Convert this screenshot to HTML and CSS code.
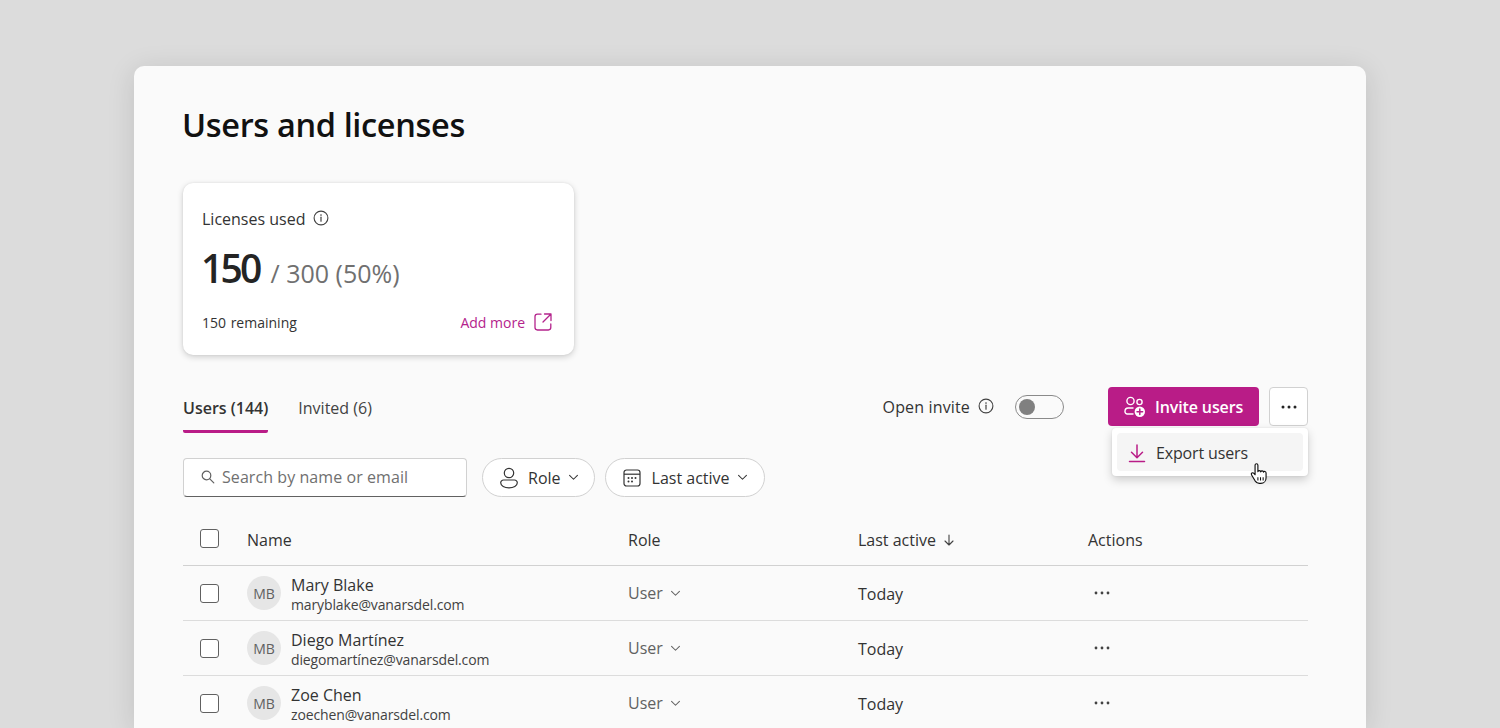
FILE: index.html
```html
<!DOCTYPE html>
<html lang="en">
<head>
<meta charset="utf-8">
<title>Users and licenses</title>
<link rel="stylesheet" href="styles.css">
</head>
<body>
<main class="panel">
  <h1 class="title">Users and licenses</h1>

  <section class="card">
    <div class="card-head">
      <span>Licenses used</span>
      <svg class="icon16" viewBox="0 0 16 16"><circle cx="8" cy="8" r="6.9" fill="none" stroke="#424242" stroke-width="1.1"/><path d="M8 7.2v4" stroke="#424242" stroke-width="1.2" stroke-linecap="round"/><circle cx="8" cy="5.1" r=".8" fill="#424242"/></svg>
    </div>
    <div class="card-figure"><span class="big">150</span><span class="rest">/ 300 (50%)</span></div>
    <div class="card-foot">
      <span class="remaining">150 remaining</span>
      <a class="addmore">Add more
        <svg class="icon20" viewBox="0 0 20 20"><path d="M8 2.200H4.400A2.400 2.400 0 0 0 2 4.600v11a2.400 2.400 0 0 0 2.400 2.400h11a2.400 2.400 0 0 0 2.400-2.400V12M11.500 2H18v6.500M18 2l-8 8" fill="none" stroke="#b4238c" stroke-width="1.300" stroke-linecap="round" stroke-linejoin="round"/></svg>
      </a>
    </div>
  </section>

  <div class="toolbar">
    <div class="tabs">
      <div class="tab active">Users (144)</div>
      <div class="tab">Invited (6)</div>
    </div>
    <div class="actions">
      <span class="invite-label">Open invite</span>
      <svg class="icon16 invite-info" viewBox="0 0 16 16"><circle cx="8" cy="8" r="6.9" fill="none" stroke="#424242" stroke-width="1.1"/><path d="M8 7.2v4" stroke="#424242" stroke-width="1.2" stroke-linecap="round"/><circle cx="8" cy="5.1" r=".8" fill="#424242"/></svg>
      <span class="toggle"><span class="knob"></span></span>
      <button class="primary">
        <svg class="icon24" viewBox="0 0 24 24"><g fill="none" stroke="#fff" stroke-width="1.4"><circle cx="7.5" cy="6" r="3.6"/><circle cx="16.5" cy="7" r="2.6"/><path d="M10.5 19H4.200A2.200 2.200 0 0 1 2 16.800v-.6A3.200 3.200 0 0 1 5.200 13h5.300"/></g><circle cx="16.800" cy="16.800" r="5.200" fill="#fff"/><path d="M16.800 14v5.600M14 16.800h5.600" stroke="#b91c87" stroke-width="1.5" stroke-linecap="round"/></svg>
        Invite users
      </button>
      <button class="more">
        <svg class="dots" viewBox="0 0 16 4"><circle cx="2" cy="2" r="1.500"/><circle cx="8" cy="2" r="1.500"/><circle cx="14" cy="2" r="1.500"/></svg>
      </button>
      <div class="menu">
        <div class="menu-item">
          <svg class="icon20" viewBox="0 0 20 20"><path d="M10 2v12.500M4.500 9.200 10 14.700l5.500-5.500M2.500 18.500h15" fill="none" stroke="#b91c87" stroke-width="1.500" stroke-linecap="round" stroke-linejoin="round"/></svg>
          Export users
        </div>
      </div>
      <svg class="cursor" viewBox="1 0.500 16.500 21"><path d="M5.500 2.600c0-1.800 2.700-1.800 2.700 0v6.200c.2-1.400 2.500-1.400 2.700.1.300-1.300 2.500-1.200 2.700.3.400-1 2.400-.8 2.400.8v4.500c0 3-2 5.500-5 5.500H9.500c-2 0-3-1-4-2.500L2.200 12c-1-1.500.9-3 2.200-1.600l1.100 1.300Z" fill="#fff" stroke="#111" stroke-width="1.100" stroke-linejoin="round"/><path d="M8.200 14v3.200M10.700 14v3.200M13.200 14v3.200" stroke="#111" stroke-width="1"/></svg>
    </div>
  </div>

  <div class="filters">
    <label class="search">
      <svg class="icon14" viewBox="0 0 14 14"><circle cx="5.500" cy="5.500" r="4.300" fill="none" stroke="#616161" stroke-width="1.200"/><path d="m8.800 8.800 4 4" stroke="#616161" stroke-width="1.200" stroke-linecap="round"/></svg>
      <span>Search by name or email</span>
    </label>
    <button class="pill">
      <svg class="icon-person" viewBox="0 0 18 22"><g fill="none" stroke="#333" stroke-width="1.200"><circle cx="9" cy="6" r="4.700"/><path d="M3.500 13h11a2.800 2.800 0 0 1 2.800 2.800c0 3-3.800 5-8.300 5s-8.300-2-8.300-5A2.800 2.800 0 0 1 3.500 13Z"/></g></svg>
      Role
      <svg class="chev" viewBox="0 0 12 8"><path d="m1.500 1.500 4.500 4.500 4.500-4.500" fill="none" stroke="#333" stroke-width="1.200" stroke-linecap="round" stroke-linejoin="round"/></svg>
    </button>
    <button class="pill">
      <svg class="icon20" viewBox="0 0 20 20"><rect x="2" y="2" width="16" height="16" rx="2.500" fill="none" stroke="#333" stroke-width="1.200"/><path d="M2 6.200h16" stroke="#333" stroke-width="1.200"/><g fill="#333"><circle cx="6.500" cy="10" r="1"/><circle cx="10" cy="10" r="1"/><circle cx="13.500" cy="10" r="1"/><circle cx="6.500" cy="13.500" r="1"/><circle cx="10" cy="13.500" r="1"/></g></svg>
      Last active
      <svg class="chev" viewBox="0 0 12 8"><path d="m1.500 1.500 4.500 4.500 4.500-4.500" fill="none" stroke="#333" stroke-width="1.200" stroke-linecap="round" stroke-linejoin="round"/></svg>
    </button>
  </div>

  <div class="table">
    <div class="row head">
      <span class="check"></span>
      <span class="cell">Name</span>
      <span class="cell">Role</span>
      <span class="cell sort">Last active
        <svg class="arrow" viewBox="0 0 12 12"><path d="M6 1v10M2 7l4 4 4-4" fill="none" stroke="#424242" stroke-width="1.100" stroke-linecap="round" stroke-linejoin="round"/></svg>
      </span>
      <span class="cell">Actions</span>
    </div>
    <div class="row">
      <span class="check"></span>
      <div class="person"><span class="avatar">MB</span><div class="who"><div class="name">Mary Blake</div><div class="email">maryblake@vanarsdel.com</div></div></div>
      <span class="role">User <svg class="chev small" viewBox="0 0 12 8"><path d="m1.500 1.500 4.500 4.500 4.500-4.500" fill="none" stroke="#616161" stroke-width="1.200" stroke-linecap="round" stroke-linejoin="round"/></svg></span>
      <span class="when">Today</span>
      <svg class="rowdots" viewBox="0 0 16 4"><circle cx="2" cy="2" r="1.400"/><circle cx="8" cy="2" r="1.400"/><circle cx="14" cy="2" r="1.400"/></svg>
    </div>
    <div class="row">
      <span class="check"></span>
      <div class="person"><span class="avatar">MB</span><div class="who"><div class="name">Diego Martínez</div><div class="email">diegomartínez@vanarsdel.com</div></div></div>
      <span class="role">User <svg class="chev small" viewBox="0 0 12 8"><path d="m1.500 1.500 4.500 4.500 4.500-4.500" fill="none" stroke="#616161" stroke-width="1.200" stroke-linecap="round" stroke-linejoin="round"/></svg></span>
      <span class="when">Today</span>
      <svg class="rowdots" viewBox="0 0 16 4"><circle cx="2" cy="2" r="1.400"/><circle cx="8" cy="2" r="1.400"/><circle cx="14" cy="2" r="1.400"/></svg>
    </div>
    <div class="row">
      <span class="check"></span>
      <div class="person"><span class="avatar">MB</span><div class="who"><div class="name">Zoe Chen</div><div class="email">zoechen@vanarsdel.com</div></div></div>
      <span class="role">User <svg class="chev small" viewBox="0 0 12 8"><path d="m1.500 1.500 4.500 4.500 4.500-4.500" fill="none" stroke="#616161" stroke-width="1.200" stroke-linecap="round" stroke-linejoin="round"/></svg></span>
      <span class="when">Today</span>
      <svg class="rowdots" viewBox="0 0 16 4"><circle cx="2" cy="2" r="1.400"/><circle cx="8" cy="2" r="1.400"/><circle cx="14" cy="2" r="1.400"/></svg>
    </div>
  </div>
</main>
</body>
</html>
```
FILE: styles.css
```css
* { box-sizing: border-box; }
html, body { margin: 0; height: 728px; overflow: hidden; }
body {
  background: #dcdcdc;
  padding: 66px 134px 0;
  font-family: "Open Sans", "Noto Sans", sans-serif;
  font-size: 16px;
  color: #242424;
}
button { font: inherit; color: inherit; cursor: pointer; }
svg { display: block; flex: none; }

.panel {
  height: 662px;
  padding: 36px 58px 0 49px;
  background: #fafafa;
  border-radius: 10px 10px 0 0;
  box-shadow: 0 4px 28px rgba(0,0,0,.12);
}
.title {
  margin: 0 0 0 -1px;
  font-size: 32.500px;
  line-height: 46px;
  font-weight: 600;
  letter-spacing: -.35px;
  color: #111;
}

.card {
  width: 391px;
  height: 172px;
  margin-top: 35px;
  padding: 24px 21px 0 19px;
  background: #fff;
  border-radius: 10px;
  box-shadow: 0 2px 6px rgba(0,0,0,.18), 0 0 2px rgba(0,0,0,.08);
}
.card-head { display: flex; align-items: center; gap: 8px; line-height: 24px; color: #333; }
.card-head .icon16 { margin-top: -3px; }
.icon16 { width: 16px; height: 16px; }
.icon14 { width: 14px; height: 14px; }
.icon20 { width: 20px; height: 20px; }
.icon24 { width: 24px; height: 24px; }
.icon-person { width: 18px; height: 22px; }
.card-figure { display: flex; align-items: baseline; gap: 11px; margin-top: 11px; height: 52px; }
.big { font-size: 39px; line-height: 52px; font-weight: 600; letter-spacing: -2.800px; margin-left: -1px; }
.rest { font-size: 25px; font-weight: 500; color: #707070; }
.card-foot { display: flex; justify-content: space-between; align-items: center; margin-top: 18px; }
.remaining { font-size: 14px; word-spacing: 1px; color: #333; }
.addmore { display: flex; align-items: center; gap: 8px; font-size: 14px; color: #b4238c; }

.toolbar { display: flex; justify-content: space-between; margin-top: 32px; height: 46px; }
.tabs { display: flex; gap: 30px; }
.tab { height: 46px; padding-top: 9px; line-height: 24px; color: #424242; }
.tab.active { font-weight: 600; color: #333; border-bottom: 3px solid #b91c87; border-radius: 0 0 2px 2px; }
.actions { position: relative; display: flex; align-items: flex-start; }
.invite-label { margin-top: 8px; line-height: 24px; letter-spacing: .15px; color: #333; }
.invite-info { margin: 11px 0 0 8px; }
.toggle { display: block; width: 49px; height: 24px; margin: 8px 44px 0 21px; padding: 3px; border: 1.500px solid #8a8a8a; border-radius: 12px; background: #fafafa; }
.knob { display: block; width: 16px; height: 16px; border-radius: 50%; background: #808080; }
.primary {
  display: flex; align-items: center; gap: 8px;
  width: 151px; height: 39px; padding: 0 0 0 15px;
  border: 0; border-radius: 4px;
  background: #b91c87; color: #fff;
  font-weight: 600; letter-spacing: -.13px;
}
.more {
  display: flex; align-items: center; justify-content: center;
  width: 39px; height: 39px; margin-left: 10px; padding: 0;
  background: #fff; border: 1px solid #d1d1d1; border-radius: 4px;
}
.dots { width: 16px; height: 4px; fill: #242424; }
.menu {
  position: absolute; top: 41px; right: 0;
  width: 196px; height: 48px; padding: 5px;
  background: #fff; border-radius: 4px;
  box-shadow: 0 4px 10px rgba(0,0,0,.18), 0 0 2px rgba(0,0,0,.1);
}
.menu-item {
  display: flex; align-items: center; gap: 9px;
  height: 38px; padding: 1px 0 0 10px;
  background: #f5f5f5; border-radius: 4px;
  letter-spacing: -.15px; color: #333;
}
.cursor { position: absolute; top: 76px; right: 40px; width: 18px; height: 22px; }

.filters { display: flex; gap: 15px; margin-top: 25px; }
.search {
  display: flex; align-items: center; gap: 7px;
  width: 284px; height: 39px; padding: 0 0 2px 17px;
  background: #fff; border: 1px solid #d1d1d1; border-bottom: 1.500px solid #616161; border-radius: 4px;
  letter-spacing: .07px; color: #707070;
}
.pill {
  display: flex; align-items: center; gap: 10px;
  height: 39px; padding: 0 15px 0 17px;
  background: #fff; border: 1px solid #d1d1d1; border-radius: 20px;
  color: #333;
}
.pill + .pill { margin-left: -5px; padding: 0 16px 0 16px; }
.chev { width: 11px; height: 7px; margin-left: -3px; }

.table { margin-top: 21px; }
.row {
  display: grid;
  grid-template-columns: 64px 381px 230px 230px 1fr;
  align-items: center;
  height: 55px;
  border-bottom: 1.500px solid #dcdcdc;
}
.row.head { height: 48px; padding-bottom: 7px; color: #333; border-bottom-color: #d1d1d1; }
.cell { margin-top: 3px; }
.check { display: block; width: 19px; height: 19px; margin-left: 17px; border: 1.200px solid #616161; border-radius: 3px; background: #fff; }
.sort { display: flex; align-items: center; gap: 7px; }
.arrow { width: 12px; height: 12px; }
.person { display: flex; align-items: center; gap: 10px; }
.who { padding-top: 4px; }
.avatar { display: flex; align-items: center; justify-content: center; width: 34px; height: 34px; border-radius: 50%; background: #e6e6e6; font-size: 14px; font-weight: 500; color: #616161; }
.name { line-height: 19px; color: #333; }
.email { font-size: 14px; line-height: 19px; letter-spacing: -.13px; color: #424242; }
.role { display: flex; align-items: center; gap: 7px; color: #616161; }
.role .chev { margin-left: 0; }
.when { color: #333; margin-top: 2px; }
.rowdots { width: 16px; height: 4px; fill: #424242; margin-left: 6px; }
```
